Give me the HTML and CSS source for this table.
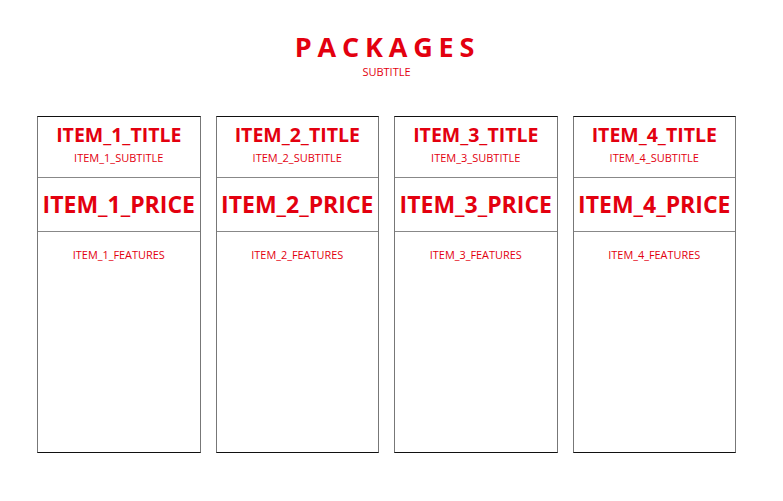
FILE: index.html
```html
<!DOCTYPE html>
<html>
<head>
<meta charset="utf-8">
<link rel="stylesheet" href="styles.css">
</head>
<body>
<div class="page">
  <header class="head">
    <h1 class="title">PACKAGES</h1>
    <div class="subtitle">SUBTITLE</div>
  </header>
  <div class="cards">
    <div class="card">
      <div class="card-head"><div class="item-title">ITEM_1_TITLE</div><div class="item-sub">ITEM_1_SUBTITLE</div></div>
      <div class="card-price">ITEM_1_PRICE</div>
      <div class="card-feat">ITEM_1_FEATURES</div>
    </div>
    <div class="card">
      <div class="card-head"><div class="item-title">ITEM_2_TITLE</div><div class="item-sub">ITEM_2_SUBTITLE</div></div>
      <div class="card-price">ITEM_2_PRICE</div>
      <div class="card-feat">ITEM_2_FEATURES</div>
    </div>
    <div class="card">
      <div class="card-head"><div class="item-title">ITEM_3_TITLE</div><div class="item-sub">ITEM_3_SUBTITLE</div></div>
      <div class="card-price">ITEM_3_PRICE</div>
      <div class="card-feat">ITEM_3_FEATURES</div>
    </div>
    <div class="card">
      <div class="card-head"><div class="item-title">ITEM_4_TITLE</div><div class="item-sub">ITEM_4_SUBTITLE</div></div>
      <div class="card-price">ITEM_4_PRICE</div>
      <div class="card-feat">ITEM_4_FEATURES</div>
    </div>
  </div>
</div>
</body>
</html>
```
FILE: styles.css
```css
html, body { margin: 0; padding: 0; background: #fff; }
body { font-family: "Open Sans", "Liberation Sans", sans-serif; color: #e3000f; }
.page { width: 783px; height: 501px; box-sizing: border-box; padding: 30px 47px 0 37px; }
.head { text-align: center; height: 86px; }
.title { margin: 0; font-size: 27px; font-weight: 700; letter-spacing: 5.8px; line-height: 34px; padding-left: 2px; }
.subtitle { font-size: 11px; line-height: 14px; margin-top: 1px; }
.cards { display: flex; gap: 15px; }
.card { width: 164px; height: 337px; box-sizing: border-box; border-top: 1px solid #111; border-bottom: 1px solid #111; border-left: 1px solid #777; border-right: 1px solid #777; display: flex; flex-direction: column; text-align: center; }
.card-head { height: 61px; border-bottom: 1px solid #888; box-sizing: border-box; padding-top: 5px; }
.item-title { font-size: 19.5px; font-weight: 700; line-height: 26px; }
.item-sub { font-size: 11px; line-height: 15px; margin-top: 2px; }
.card-price { height: 54px; border-bottom: 1px solid #888; box-sizing: border-box; font-size: 23px; font-weight: 700; line-height: 52px; }
.card-feat { font-size: 10.9px; padding-top: 16px; line-height: 14px; }
```
